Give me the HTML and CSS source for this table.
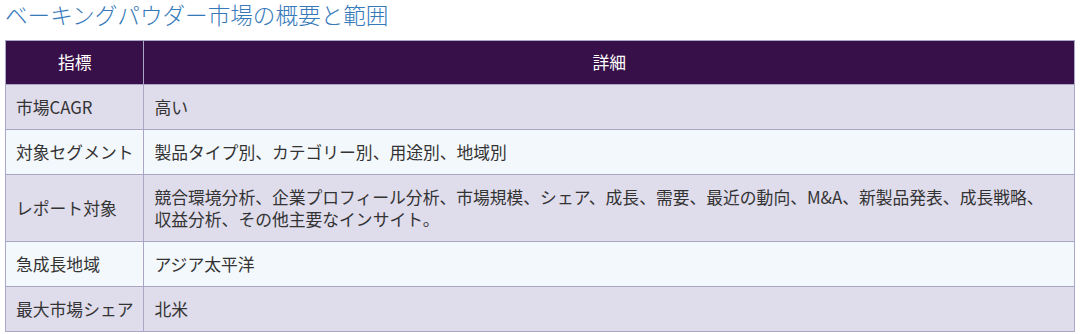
FILE: index.html
```html
<!DOCTYPE html>
<html lang="ja">
<head>
<meta charset="utf-8">
<link rel="stylesheet" href="styles.css">
</head>
<body>
<h2 class="title">ベーキングパウダー市場の概要と範囲</h2>
<table class="tbl">
  <thead>
    <tr><th class="key">指標</th><th>詳細</th></tr>
  </thead>
  <tbody>
    <tr><td class="key">市場CAGR</td><td>高い</td></tr>
    <tr><td class="key">対象セグメント</td><td>製品タイプ別、カテゴリー別、用途別、地域別</td></tr>
    <tr><td class="key">レポート対象</td><td>競合環境分析、企業プロフィール分析、市場規模、シェア、成長、需要、最近の動向、M&amp;A、新製品発表、成長戦略、<br>収益分析、その他主要なインサイト。</td></tr>
    <tr><td class="key">急成長地域</td><td>アジア太平洋</td></tr>
    <tr><td class="key">最大市場シェア</td><td>北米</td></tr>
  </tbody>
</table>
</body>
</html>
```
FILE: styles.css
```css
html, body {
  margin: 0;
  padding: 0;
  background: #ffffff;
}
body {
  padding: 0 9px 0 5px;
  font-family: "Noto Sans CJK JP", "Noto Sans", sans-serif;
}
.title {
  margin: 0;
  padding-top: 1px;
  height: 39px;
  font-size: 22.6px;
  line-height: 28px;
  font-weight: 300;
  color: #3579ba;
}
.tbl {
  width: 1070px;
  border-collapse: collapse;
  font-size: 16.8px;
  line-height: 22px;
  color: #333333;
}
.tbl th, .tbl td {
  border: 1px solid #aba5c6;
  padding: 11px 10px;
  text-align: left;
  vertical-align: middle;
}
.tbl .key {
  white-space: nowrap;
  width: 116px;
}
.tbl th {
  background: #381049;
  color: #ffffff;
  font-weight: normal;
  text-align: center;
  padding: 10px 10px 11px;
}
.tbl tbody tr:nth-child(odd) td { background: #dfdcec; }
.tbl tbody tr:nth-child(even) td { background: #f3f8fc; }
```
